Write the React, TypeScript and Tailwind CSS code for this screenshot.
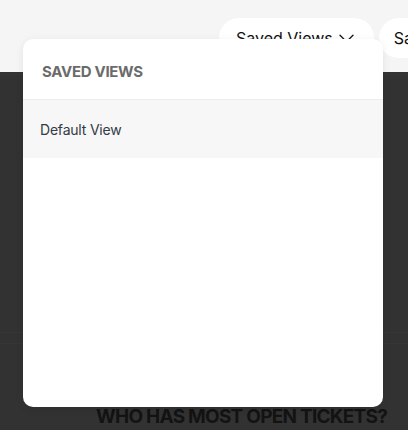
import React from "react";

function Chevron() {
  return (
    <svg width="15" height="9" viewBox="0 0 15 9" fill="none" stroke="#111" strokeWidth="1.3" strokeLinecap="round" strokeLinejoin="round">
      <path d="M1 1.2 7.5 7.6 14 1.2" />
    </svg>
  );
}

export default function App() {
  return (
    <div
      className="relative w-[408px] h-[430px] overflow-hidden bg-[#f5f5f5] flex flex-col"
      style={{ fontFamily: "Inter, 'Noto Sans', sans-serif" }}
    >
      <div className="h-[72px] shrink-0 flex items-start pt-[18px] pl-[219px] gap-[5px]">
        <div className="h-[40px] shrink-0 rounded-full bg-white pl-[17px] pr-[20px] flex items-center gap-[6px] text-[16px] text-[#111]">
          <span>Saved Views</span>
          <Chevron />
        </div>
        <div className="h-[40px] shrink-0 rounded-full bg-white pl-[15px] pr-[16px] flex items-center text-[16px] text-[#111]">
          <span>Saved</span>
        </div>
      </div>
      <div className="flex-1 bg-[#323232] flex flex-col">
        <div className="h-[3px] border-b border-[#363636]" />
        <div className="flex-1" />
        <div className="h-[12px] border-t border-b border-[#363636]" />
        <div className="h-[86px] flex items-end pl-[96px] pb-[4px]">
          <span className="text-[19px] font-bold tracking-[-0.75px] text-[#131313] leading-none">WHO HAS MOST OPEN TICKETS?</span>
        </div>
      </div>

      <div className="absolute left-[23px] top-[39px] w-[360px] h-[368px] bg-white rounded-[10px] overflow-hidden flex flex-col shadow-[0_2px_8px_rgba(0,0,0,0.08)]">
        <div className="h-[61px] shrink-0 border-b border-[#ededed] flex items-center pl-[19px] pt-[7px]">
          <span className="text-[15px] font-bold text-[#6b6b6b] tracking-[-0.3px]">SAVED VIEWS</span>
        </div>
        <div className="h-[58px] shrink-0 bg-[#f7f7f7] flex items-center pl-[17px]">
          <span className="text-[14px] tracking-[-0.2px] text-[#343a46]">Default View</span>
        </div>
      </div>
    </div>
  );
}
